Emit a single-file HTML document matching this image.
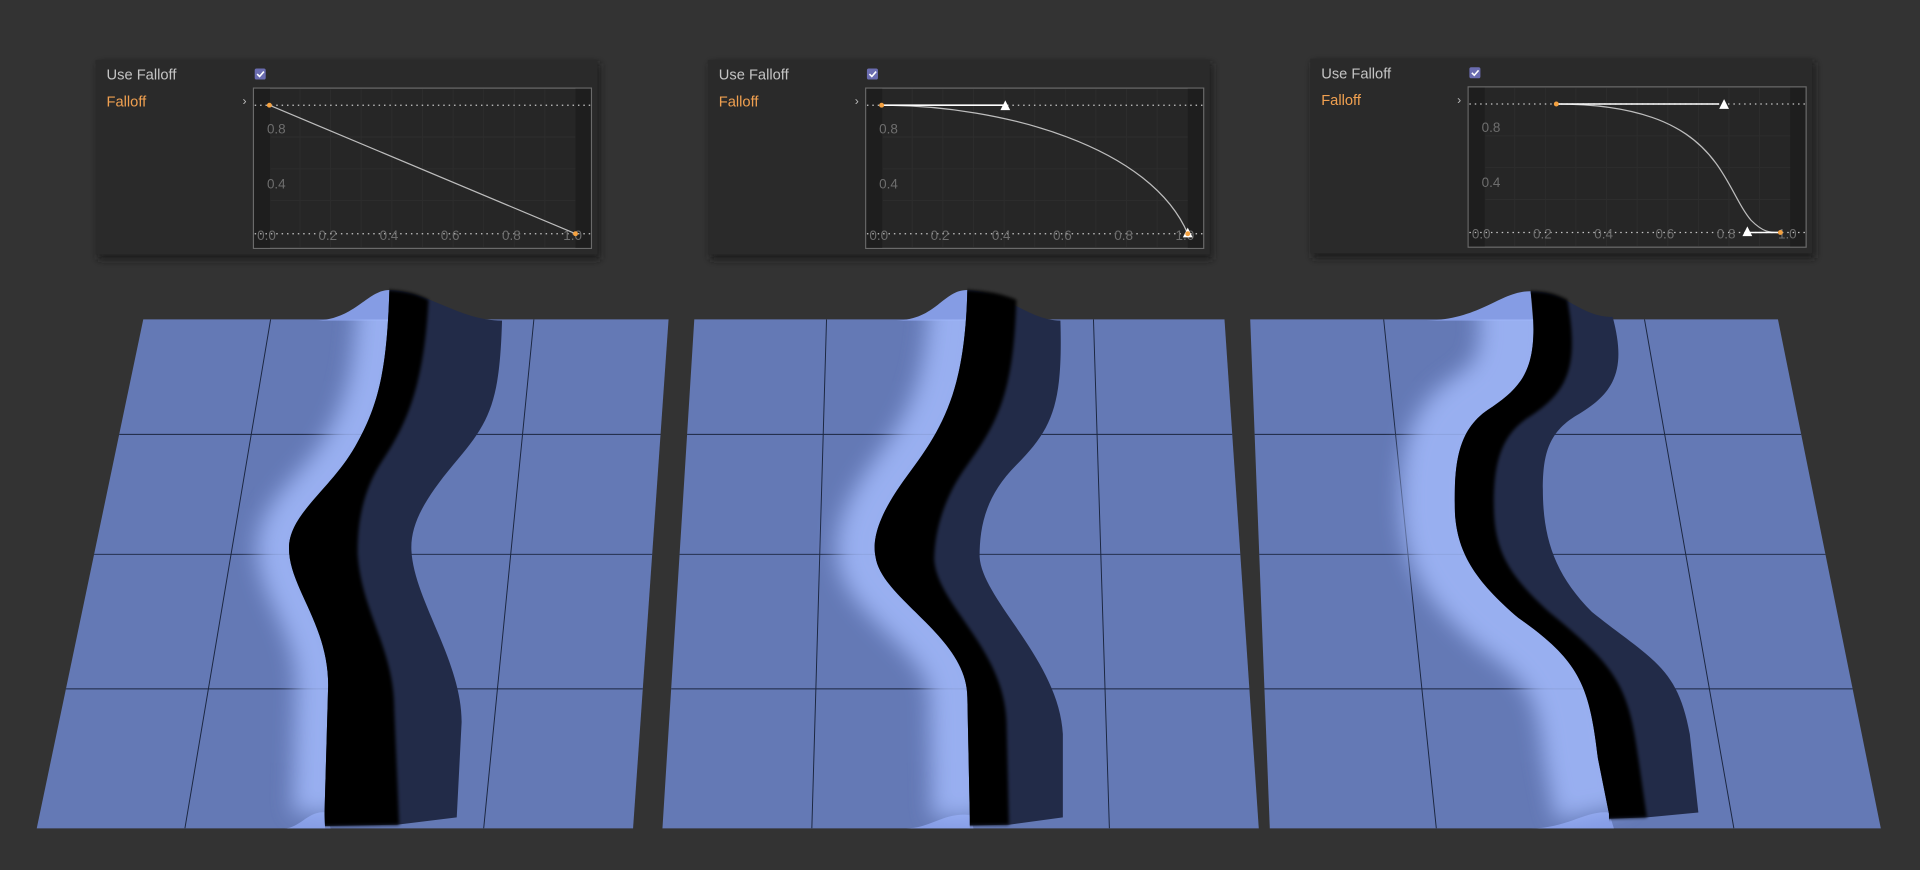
<!DOCTYPE html>
<html><head><meta charset="utf-8"><style>
html,body{margin:0;padding:0;background:#333;width:1920px;height:870px;overflow:hidden}
svg{display:block}
text{font-family:"Liberation Sans",sans-serif}
</style></head><body>
<svg width="1920" height="870" viewBox="0 0 1568 711" preserveAspectRatio="none" xmlns="http://www.w3.org/2000/svg">
<defs>
<filter id="sh" x="-10%" y="-10%" width="120%" height="130%"><feGaussianBlur stdDeviation="3"/></filter>
<filter id="bl" x="-50%" y="-10%" width="200%" height="120%"><feGaussianBlur stdDeviation="9"/></filter>
<filter id="bs" x="-20%" y="-5%" width="140%" height="110%"><feGaussianBlur stdDeviation="1.2"/></filter>
<g id="panel">
<rect x="80" y="52" width="410" height="160" fill="#1f1f1f" filter="url(#sh)"/>
<rect x="78" y="49" width="410" height="159" fill="#2a2a2a"/>
<text x="87" y="65" font-size="12" fill="#c4c4c4">Use Falloff</text>
<text x="87" y="87" font-size="12" fill="#f0a050">Falloff</text>
<text x="198" y="86" font-size="10" fill="#bbb">›</text>
<rect x="208" y="56" width="9" height="9" rx="1.5" fill="#6a6cb0"/>
<path d="M210 60.5 L212 62.5 L215.5 58.5" stroke="#fff" stroke-width="1.3" fill="none"/>
<rect x="207" y="72" width="276" height="131" fill="#262626" stroke="#6a6a6a" stroke-width="1"/>
<rect x="207.5" y="72.5" width="13" height="130" fill="#1e1e1e"/>
<rect x="470" y="72.5" width="12.5" height="130" fill="#1e1e1e"/>
<g stroke="#2d2d2d" stroke-width="0.8">
<path d="M245 73V202M270 73V202M295 73V202M320 73V202M345 73V202M370 73V202M395 73V202M420 73V202M445 73V202"/>
<path d="M221 112H470M221 138H470M221 164H470"/>
</g>
<path d="M208 86H483M208 191H483" stroke="#c8c8c8" stroke-width="1" stroke-dasharray="1.2 3.2"/>
<g font-size="11" fill="#6e6e6e">
<text x="218" y="109">0.8</text><text x="218" y="154">0.4</text>
<text x="210" y="196">0.0</text><text x="260" y="196">0.2</text><text x="310" y="196">0.4</text><text x="360" y="196">0.6</text><text x="410" y="196">0.8</text><text x="460" y="196">1.0</text>
</g>
</g>
<clipPath id="c1"><path d="M117 261H546L517 677H30Z"/></clipPath>
<clipPath id="c2"><path d="M567 261H1000L1028 677H541Z"/></clipPath>
<clipPath id="c3"><path d="M1021 261H1452L1536 677H1037Z"/></clipPath>
<clipPath id="r1"><path d="M318 237C316 300 310 330 290 365C270 400 236 420 236 448C236 480 268 510 268 560L265 665L266 690H700V230H318Z"/></clipPath>
<clipPath id="r2"><path d="M790 237C788 320 770 350 740 390C718 420 712 440 715 455C720 490 790 520 790 570L792 668L792 690H1100V230H790Z"/></clipPath>
<clipPath id="r3"><path d="M1250 238C1258 300 1245 315 1215 335C1190 352 1188 380 1188 412C1188 450 1204 474 1240 505C1290 540 1298 560 1305 620L1314 665L1314 690H1568V230H1250Z"/></clipPath>
</defs>

<use href="#panel"/>
<use href="#panel" x="500"/>
<use href="#panel" x="992" y="-1"/>

<g fill="none" stroke="#bdbdbd" stroke-width="1">
<path d="M220 86L470 191"/>
<path d="M720 86C820 86 940 120 970 191"/>
<path d="M1271 85C1404 85 1405 150 1430 180C1440 190 1445 190 1454 190"/>
</g>
<g stroke="#fff" stroke-width="1.3">
<path d="M720 86H820"/><path d="M1271 85H1404"/><path d="M1427 190H1454"/>
</g>
<g fill="#fff">
<path d="M817 90L821 82L825 90Z"/><path d="M966 194L970 186L974 194Z"/>
<path d="M1404 89L1408 81L1412 89Z"/><path d="M1423 193L1427 185L1431 193Z"/>
</g>
<g fill="#f4a140">
<circle cx="220" cy="86" r="2"/><circle cx="470" cy="191" r="2"/>
<circle cx="720" cy="86" r="2"/><circle cx="970" cy="191" r="2"/>
<circle cx="1271" cy="85" r="2"/><circle cx="1454" cy="190" r="2"/>
</g>

<!-- mesh 1 -->
<path d="M117 261H546L517 677H30Z" fill="#6479b5"/>
<g clip-path="url(#c1)" stroke="#1b2640" stroke-width="0.8" fill="none">
<path d="M0 355H600M0 453H600M0 563H600"/>
<path d="M221 261L151 677M436 261L395 677"/>
</g>
<path d="M258 262C290 261 300 237 318 237L318 262Z" fill="#859ce4"/>
<path d="M232 677C245 677 252 662 266 664L270 677Z" fill="#859ce4"/>
<g clip-path="url(#c1)" opacity="0.85"><path transform="translate(-6,0)" d="M318 237C316 300 310 330 290 365C270 400 236 420 236 448C236 480 268 510 268 560L265 665" stroke="#a2b9fb" stroke-width="40" fill="none" filter="url(#bl)"/></g>
<g clip-path="url(#r1)">
<path d="M318 237C350 238 375 262 410 262C408 330 400 345 370 380C345 410 335 430 336 450C338 490 377 540 377 590L373 668L324 674L0 680V230Z" fill="#222b48"/>
<path d="M318 237C335 238 342 241 350 245C346 320 330 350 310 380C295 405 292 430 292 452C295 500 322 530 322 580L326 674L0 680V230Z" fill="#000" filter="url(#bs)"/>
</g>

<!-- mesh 2 -->
<path d="M567 261H1000L1028 677H541Z" fill="#6479b5"/>
<g clip-path="url(#c2)" stroke="#1b2640" stroke-width="0.8" fill="none">
<path d="M500 355H1100M500 453H1100M500 563H1100"/>
<path d="M675 261L663 677M893 261L906 677"/>
</g>
<path d="M732 262C765 261 770 237 790 237L790 262Z" fill="#859ce4"/>
<path d="M740 677C760 677 770 664 792 666L795 677Z" fill="#859ce4"/>
<g clip-path="url(#c2)" opacity="0.85"><path transform="translate(-8,0)" d="M790 237C788 320 770 350 740 390C718 420 712 440 715 455C720 490 790 520 790 570L792 668" stroke="#a2b9fb" stroke-width="46" fill="none" filter="url(#bl)"/></g>
<g clip-path="url(#r2)">
<path d="M790 237C820 238 840 262 866 262C868 330 860 350 830 380C805 405 800 430 800 455C802 490 865 540 868 600L868 668L824 674L500 680V230Z" fill="#222b48"/>
<path d="M790 237C810 238 820 241 830 245C828 320 815 345 790 380C768 410 763 440 763 458C766 495 820 530 822 590L824 674L500 680V230Z" fill="#000" filter="url(#bs)"/>
</g>

<!-- mesh 3 -->
<path d="M1021 261H1452L1536 677H1037Z" fill="#6479b5"/>
<g clip-path="url(#c3)" stroke="#1b2640" stroke-width="0.8" fill="none">
<path d="M1000 355H1568M1000 453H1568M1000 563H1568"/>
<path d="M1130 261L1173 677M1343 261L1416 677"/>
</g>
<path d="M1165 262C1210 261 1225 238 1250 238L1252 262Z" fill="#859ce4"/>
<path d="M1250 677C1280 677 1295 662 1314 664L1318 677Z" fill="#859ce4"/>
<g clip-path="url(#c3)" opacity="0.85"><path transform="translate(-14,0)" d="M1250 238C1258 300 1245 315 1215 335C1190 352 1188 380 1188 412C1188 450 1204 474 1240 505C1290 540 1298 560 1305 620L1314 665" stroke="#a2b9fb" stroke-width="60" fill="none" filter="url(#bl)"/></g>
<g clip-path="url(#r3)">
<path d="M1250 238C1280 238 1290 259 1317 259C1328 300 1320 320 1290 338C1265 352 1260 370 1260 400C1260 440 1270 470 1300 500C1350 540 1370 545 1380 600L1387 664L1345 668L1000 680V230Z" fill="#222b48"/>
<path d="M1250 238C1265 238 1272 241 1280 245C1290 300 1280 320 1250 340C1225 355 1220 380 1220 412C1220 450 1232 470 1265 500C1320 545 1330 560 1338 620L1345 668L1000 680V230Z" fill="#000" filter="url(#bs)"/>
</g>
</svg>
</body></html>
